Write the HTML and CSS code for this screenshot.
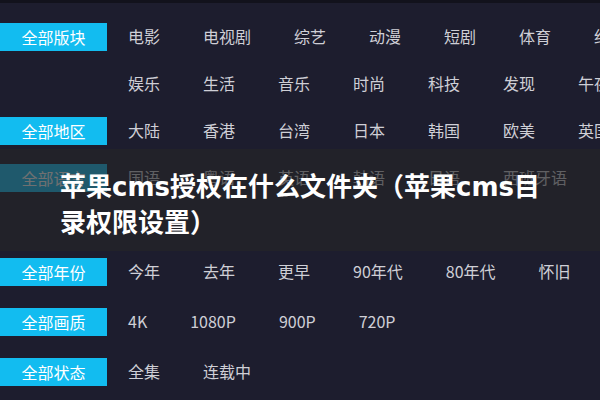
FILE: index.html
```html
<!DOCTYPE html>
<html lang="zh-CN">
<head>
<meta charset="utf-8">
<title>苹果cms授权在什么文件夹</title>
<link rel="stylesheet" href="styles.css">
</head>
<body>
<div class="page">
  <div class="topbar"></div>
  <div class="filters">
    <div class="group">
      <span class="label">全部版块</span>
      <ul class="items">
        <li>电影</li><li>电视剧</li><li>综艺</li><li>动漫</li><li>短剧</li><li>体育</li><li>纪录片</li>
        <li>娱乐</li><li>生活</li><li>音乐</li><li>时尚</li><li>科技</li><li>发现</li><li>午夜</li>
      </ul>
    </div>
    <div class="group">
      <span class="label">全部地区</span>
      <ul class="items">
        <li>大陆</li><li>香港</li><li>台湾</li><li>日本</li><li>韩国</li><li>欧美</li><li>英国</li>
      </ul>
    </div>
    <div class="group">
      <span class="label">全部语言</span>
      <ul class="items tall">
        <li>国语</li><li>粤语</li><li>英语</li><li>韩语</li><li>日语</li><li>西班牙语</li>
      </ul>
    </div>
    <div class="group">
      <span class="label">全部年份</span>
      <ul class="items">
        <li>今年</li><li>去年</li><li>更早</li><li>90年代</li><li>80年代</li><li>怀旧</li>
      </ul>
    </div>
    <div class="group loose">
      <span class="label">全部画质</span>
      <ul class="items">
        <li>4K</li><li>1080P</li><li>900P</li><li>720P</li>
      </ul>
    </div>
    <div class="group loose">
      <span class="label">全部状态</span>
      <ul class="items">
        <li>全集</li><li>连载中</li>
      </ul>
    </div>
  </div>
  <div class="overlay">
    <h1 class="title">苹果cms授权在什么文件夹（苹果cms目录权限设置）</h1>
  </div>
</div>
</body>
</html>
```

FILE: styles.css
```css
html, body {
  margin: 0;
  padding: 0;
}
body {
  background: #1d1d2e;
  width: 600px;
  height: 400px;
  overflow: hidden;
  font-family: "Noto Sans CJK SC", "Noto Sans", sans-serif;
}
.page {
  position: relative;
  width: 600px;
  height: 400px;
  overflow: hidden;
}
.topbar {
  height: 3px;
  background: #12121c;
}
.filters {
  padding-top: 10px;
}
.group {
  display: flex;
  gap: 21px;
}
.group.loose {
  margin-top: 3px;
}
.label {
  flex: none;
  width: 107px;
  height: 28px;
  margin-top: 10px;
  background: #12bcf0;
  color: #ffffff;
  font-size: 16px;
  line-height: 28px;
  text-align: center;
}
.items {
  flex: none;
  width: 560px;
  display: flex;
  flex-wrap: wrap;
  align-content: flex-start;
  column-gap: 43px;
  margin: 0;
  padding: 0;
  list-style: none;
}
.items.tall {
  min-height: 94px;
}
.items li {
  font-size: 16px;
  line-height: 47px;
  color: #cfcfd6;
}
.overlay {
  position: absolute;
  left: 0;
  top: 149px;
  width: 600px;
  height: 102px;
  box-sizing: border-box;
  padding: 20px 0 0 60px;
  background: rgba(38, 38, 40, 0.66);
}
.title {
  margin: 0;
  width: 495px;
  font-family: "DejaVu Sans", "Noto Sans CJK SC", sans-serif;
  font-weight: bold;
  font-size: 26px;
  line-height: 36px;
  color: #ffffff;
}
```
